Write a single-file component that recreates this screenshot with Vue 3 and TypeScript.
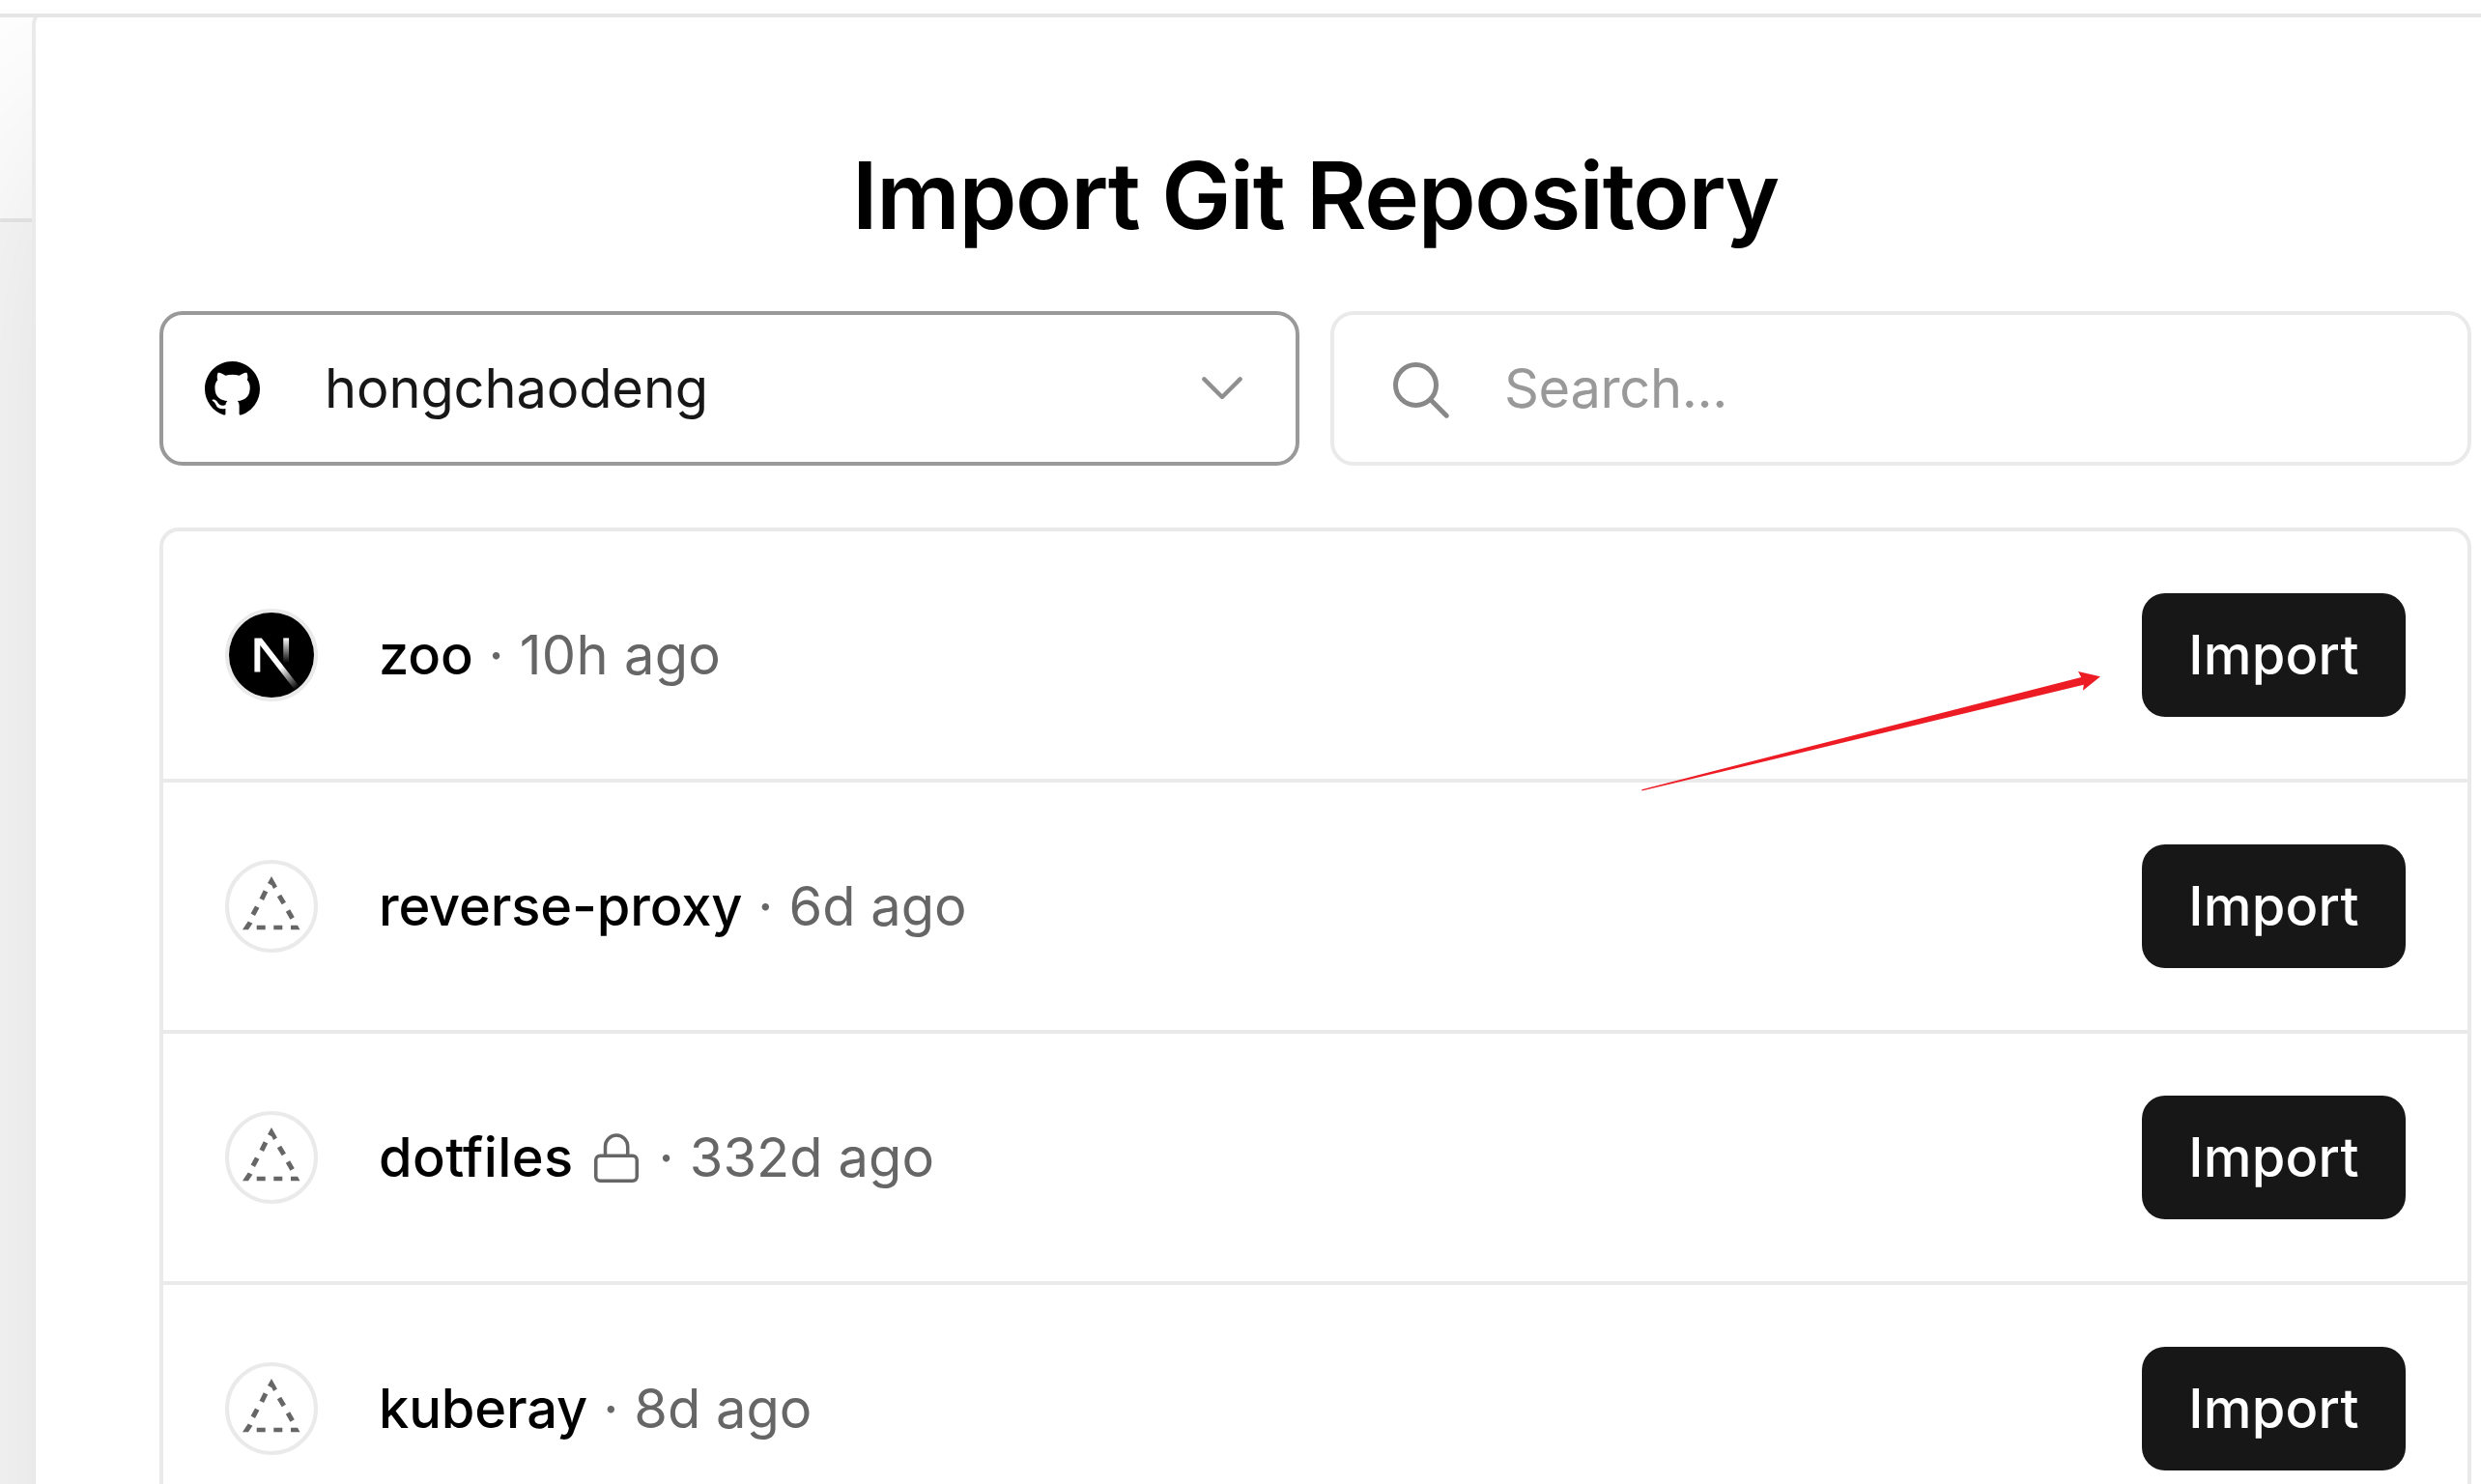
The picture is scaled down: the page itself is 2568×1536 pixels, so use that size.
<script setup lang="ts">
interface Repo {
  name: string
  age: string
  framework: 'next' | 'none'
  isPrivate: boolean
  tracking: number
  ageTracking: number
}

const account = 'hongchaodeng'

const repos: Repo[] = [
  { name: 'zoo', age: '10h ago', framework: 'next', isPrivate: false, tracking: -0.15, ageTracking: 0.3 },
  { name: 'reverse-proxy', age: '6d ago', framework: 'none', isPrivate: false, tracking: -0.15, ageTracking: 0 },
  { name: 'dotfiles', age: '332d ago', framework: 'none', isPrivate: true, tracking: 0.36, ageTracking: 0.1 },
  { name: 'kuberay', age: '8d ago', framework: 'none', isPrivate: false, tracking: -0.12, ageTracking: 0 },
]
</script>

<template>
  <div class="page">
    <div class="topbar"></div>
    <div class="stage">
      <div class="backdrop">
        <div class="backdrop-head"></div>
      </div>
      <main class="panel">
        <h1 class="title">Import Git Repository</h1>

        <div class="controls">
          <div class="select">
            <svg class="github" viewBox="0 0 16 16" fill="#000">
              <path fill-rule="evenodd" d="M8 0C3.58 0 0 3.58 0 8c0 3.54 2.29 6.53 5.47 7.59.4.07.55-.17.55-.38 0-.19-.01-.82-.01-1.49-2.01.37-2.53-.49-2.69-.94-.09-.23-.48-.94-.82-1.13-.28-.15-.68-.52-.01-.53.63-.01 1.08.58 1.23.82.72 1.21 1.87.87 2.33.66.07-.52.28-.87.51-1.07-1.78-.2-3.64-.89-3.64-3.95 0-.87.31-1.59.82-2.15-.08-.2-.36-1.02.08-2.12 0 0 .67-.21 2.2.82.64-.18 1.32-.27 2-.27s1.36.09 2 .27c1.53-1.04 2.2-.82 2.2-.82.44 1.1.16 1.92.08 2.12.51.56.82 1.27.82 2.15 0 3.07-1.87 3.75-3.65 3.95.29.25.54.73.54 1.48 0 1.07-.01 1.93-.01 2.2 0 .21.15.46.55.38A8.013 8.013 0 0 0 16 8c0-4.42-3.58-8-8-8z" />
            </svg>
            <span class="account">{{ account }}</span>
            <svg class="chevron" viewBox="0 0 42 24" fill="none" stroke="#8f8f8f" stroke-width="4.4" stroke-linecap="round" stroke-linejoin="round">
              <path d="M2.4 2.4 21 21 39.6 2.4" />
            </svg>
          </div>
          <div class="search">
            <svg class="magnifier" viewBox="0 0 58 58" fill="none" stroke="#888" stroke-width="5" stroke-linecap="round">
              <circle cx="23.5" cy="23.5" r="21" />
              <path d="M39 39 55.2 55.2" />
            </svg>
            <span class="placeholder">Search...</span>
          </div>
        </div>

        <ul class="list">
          <li v-for="repo in repos" :key="repo.name" class="row">
            <div class="avatar">
              <svg v-if="repo.framework === 'next'" viewBox="0 0 180 180" class="next">
                <defs>
                  <linearGradient id="next-diagonal" x1="109" y1="116.5" x2="144.5" y2="160.5" gradientUnits="userSpaceOnUse">
                    <stop stop-color="#fff" />
                    <stop offset="1" stop-color="#fff" stop-opacity="0" />
                  </linearGradient>
                  <linearGradient id="next-stem" x1="121" y1="54" x2="120.8" y2="106.9" gradientUnits="userSpaceOnUse">
                    <stop stop-color="#fff" />
                    <stop offset="1" stop-color="#fff" stop-opacity="0" />
                  </linearGradient>
                </defs>
                <circle cx="90" cy="90" r="90" fill="#000" />
                <path fill="url(#next-diagonal)" d="M149.508 157.52 69.142 54H54v71.97h12.114V69.384l73.885 95.461a90.304 90.304 0 0 0 9.509-7.325z" />
                <path fill="url(#next-stem)" d="M115 54h12v72h-12z" />
              </svg>
              <svg v-else viewBox="4 4 88 88" class="triangle" fill="none" stroke="#666" stroke-width="5">
                <path fill="#666" stroke="none" d="M48 17 53.9 27.4 50 30 48.2 26.2 44 24z" />
                <path d="M42 32.4 37.8 40.8M33.2 48.6 28.8 56.8M56 37 60.8 45M65 52.6 69.6 60.6" />
                <path fill="#666" stroke="none" d="M23.8 63.4 28.4 65.8 24 72.2H18z" />
                <path fill="#666" stroke="none" d="M32.7 67.8h9v4.4h-9zM50.3 67.8h9v4.4h-9zM68 67.8h7L77.5 72.2H68z" />
              </svg>
            </div>
            <div class="info">
              <span class="name" :style="{ letterSpacing: repo.tracking + 'px' }">{{ repo.name }}</span>
              <svg v-if="repo.isPrivate" class="lock" viewBox="0 0 46 51" fill="none" stroke="#666" stroke-width="3.5">
                <rect x="1.75" y="23.25" width="42.5" height="26" rx="4.5" />
                <path d="M11.5 23V13.6a11.6 11.6 0 0 1 23.2 0V23" />
              </svg>
              <span class="dot">·</span>
              <span class="age" :style="{ letterSpacing: repo.ageTracking + 'px' }">{{ repo.age }}</span>
            </div>
            <button class="import" type="button">Import</button>
          </li>
        </ul>
      </main>
    </div>
    <svg class="arrow" viewBox="0 0 476 127" fill="#ed1c24">
      <path d="M.3 124.2 455.2 7.9 452 2 475 7.3 457 21.8 457.8 15.8.5 125.5z" />
    </svg>
  </div>
</template>

<style>
html,
body {
  margin: 0;
  overflow: hidden;
}
</style>

<style scoped>
* {
  box-sizing: border-box;
}

.page {
  position: relative;
  display: flex;
  flex-direction: column;
  width: 2568px;
  height: 1536px;
  overflow: hidden;
  background: #fff;
  color: #000;
  font-family: Inter, sans-serif;
  font-size: 56px;
}

.topbar {
  flex: none;
  height: 18px;
  border-bottom: 4px solid #e6e6e6;
  background: #fff;
}

.stage {
  flex: 1;
  display: flex;
  overflow: hidden;
}

.backdrop {
  flex: none;
  width: 33px;
  background: #fafafa;
}

.backdrop-head {
  height: 212px;
  border-bottom: 4px solid #eaeaea;
  background: #fff;
}

.panel {
  flex: none;
  width: 2657px;
  height: 2400px;
  margin-top: -12px;
  padding: 132px 128px 0;
  border: 4px solid #eaeaea;
  border-radius: 20px;
  background: #fff;
  box-shadow: 0 120px 240px rgba(0, 0, 0, 0.12);
}

.title {
  margin: 0 0 60px;
  font-size: 96px;
  font-weight: 600;
  line-height: 120px;
  letter-spacing: -1.3px;
  text-align: center;
}

.controls {
  display: grid;
  grid-template-columns: 1180px 1fr;
  gap: 32px;
  margin-bottom: 64px;
}

.select,
.search {
  display: flex;
  align-items: center;
  height: 160px;
  border: 4px solid #eaeaea;
  border-radius: 24px;
}

.select {
  padding: 0 55px 0 43px;
  border-color: #999;
  color: #171717;
}

.github {
  width: 57px;
  height: 57px;
  margin-top: 1px;
}

.account {
  flex: 1;
  margin-left: 67px;
  letter-spacing: -0.13px;
}

.chevron {
  width: 42px;
  height: 24px;
}

.search {
  padding-left: 61px;
}

.magnifier {
  width: 58px;
  height: 58px;
  margin-top: 3px;
}

.placeholder {
  margin-left: 57px;
  letter-spacing: -0.35px;
  color: #999;
}

.list {
  margin: 0;
  padding: 0;
  border: 4px solid #eaeaea;
  border-radius: 20px;
  list-style: none;
}

.row {
  display: flex;
  align-items: center;
  height: 256px;
  padding: 0 64px;
}

.row + .row {
  height: 260px;
  border-top: 4px solid #eaeaea;
}

.avatar {
  flex: none;
  width: 96px;
  height: 96px;
  border: 4px solid #eaeaea;
  border-radius: 50%;
}

.avatar svg {
  display: block;
  width: 88px;
  height: 88px;
}

.info {
  flex: 1;
  display: flex;
  align-items: center;
  margin-left: 63px;
}

.name {
  font-weight: 500;
}

.lock {
  width: 46px;
  height: 51px;
  margin: 0 5px 0 21px;
}

.dot {
  margin: 0 16px;
  color: #666;
}

.age {
  color: #666;
}

.import {
  width: 273px;
  height: 128px;
  padding: 0;
  border: 0;
  border-radius: 24px;
  background: #171717;
  color: #fff;
  font: 500 56px Inter, sans-serif;
  letter-spacing: 0.2px;
}

.arrow {
  position: absolute;
  left: 1699px;
  top: 693px;
  width: 476px;
  height: 127px;
}
</style>
